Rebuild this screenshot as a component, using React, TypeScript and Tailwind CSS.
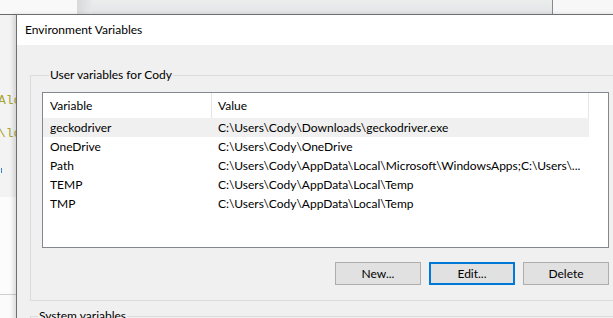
const rows = [
  { name: "geckodriver", value: "C:\\Users\\Cody\\Downloads\\geckodriver.exe" },
  { name: "OneDrive", value: "C:\\Users\\Cody\\OneDrive" },
  { name: "Path", value: "C:\\Users\\Cody\\AppData\\Local\\Microsoft\\WindowsApps;C:\\Users\\..." },
  { name: "TEMP", value: "C:\\Users\\Cody\\AppData\\Local\\Temp" },
  { name: "TMP", value: "C:\\Users\\Cody\\AppData\\Local\\Temp" },
];

const Button = ({ label, focused }: { label: string; focused?: boolean }) => (
  <button
    className={
      focused
        ? "w-[86px] h-[23px] bg-[#e1e1e1] border-2 border-[#0078d7] text-[12px] text-black"
        : "w-[86px] h-[23px] bg-[#e1e1e1] border border-[#adadad] text-[12px] text-black"
    }
  >
    {label}
  </button>
);

export default function App() {
  return (
    <div
      className="relative w-[613px] h-[318px] overflow-hidden bg-[#fbfbfb] text-black"
      style={{ fontFamily: '"Segoe UI", Lato, "Noto Sans", sans-serif' }}
    >
      {/* window behind */}
      <div className="flex h-[15px] border-b border-[#6b6b6b]">
        <div className="w-[77px] bg-[#f9f9f9]" />
        <div className="w-[15px] bg-gradient-to-r from-[#d9d9d9] to-[#e8e9eb]" />
        <div className="flex-1 bg-gradient-to-b from-[#eceded] to-[#e3e4e6]" />
        <div className="w-px bg-[#8a8a8a]" />
        <div className="w-[60px] bg-[#f7f7f7]" />
      </div>
      <div className="w-[16px] flex flex-col">
        <div className="h-[182px] bg-[#f3f3f3] font-mono text-[13px] text-[#a9a635] leading-[16px] overflow-hidden">
          <div className="mt-[78px] -ml-[2px] whitespace-nowrap">Alo</div>
          <div className="mt-[17px] -ml-[2px] whitespace-nowrap">\lo</div>
          <div className="mt-[26px] ml-[1px] w-px h-[5px] bg-[#3b82c4]" />
        </div>
        <div className="h-[98px] bg-[#fcfcfc] border-b border-[#cfcfcf]" />
      </div>

      {/* dialog */}
      <div className="absolute left-[16px] top-[14px] w-[640px] h-[360px] border-l border-t border-[#6f6f6f] flex flex-col shadow-[-3px_0_4px_rgba(0,0,0,0.12)]">
        <div className="h-[30px] shrink-0 bg-white flex items-center pl-[8px] text-[12px] pb-[1px]">
          Environment Variables
        </div>
        <div className="flex-1 bg-[#f0f0f0] pt-[22px] pl-[13px]">
          <fieldset className="w-[590px] border border-[#dcdcdc] pl-[11px] pb-[15px]">
            <legend className="ml-[7px] px-[1px] text-[12px] leading-[16px]">User variables for Cody</legend>
            <div className="mt-[9px] w-[567px] h-[156px] bg-white border border-[#828790] text-[12px]">
              <div className="flex h-[25px] items-center">
                <div className="w-[169px] h-full flex items-center pl-[7px] border-r border-[#e5e5e5]">Variable</div>
                <div className="w-[377px] h-full flex items-center pl-[6px] border-r border-[#e5e5e5]">Value</div>
              </div>
              {rows.map((row, index) => (
                <div
                  key={index}
                  className={`flex h-[19px] w-[546px] items-center ${index === 0 ? "bg-[#f0f0f0]" : ""}`}
                >
                  <div className="w-[169px] pl-[7px]">{row.name}</div>
                  <div className="w-[377px] pl-[6px] whitespace-nowrap">{row.value}</div>
                </div>
              ))}
            </div>
            <div className="mt-[14px] w-[567px] flex justify-end gap-[8px]">
              <Button label="New..." />
              <Button label="Edit..." focused />
              <Button label="Delete" />
            </div>
          </fieldset>
          <fieldset className="mt-[7px] w-[590px] h-[40px] border border-[#dcdcdc]">
            <legend className="ml-[7px] px-[1px] text-[12px] leading-[16px]">System variables</legend>
          </fieldset>
        </div>
      </div>
    </div>
  );
}
